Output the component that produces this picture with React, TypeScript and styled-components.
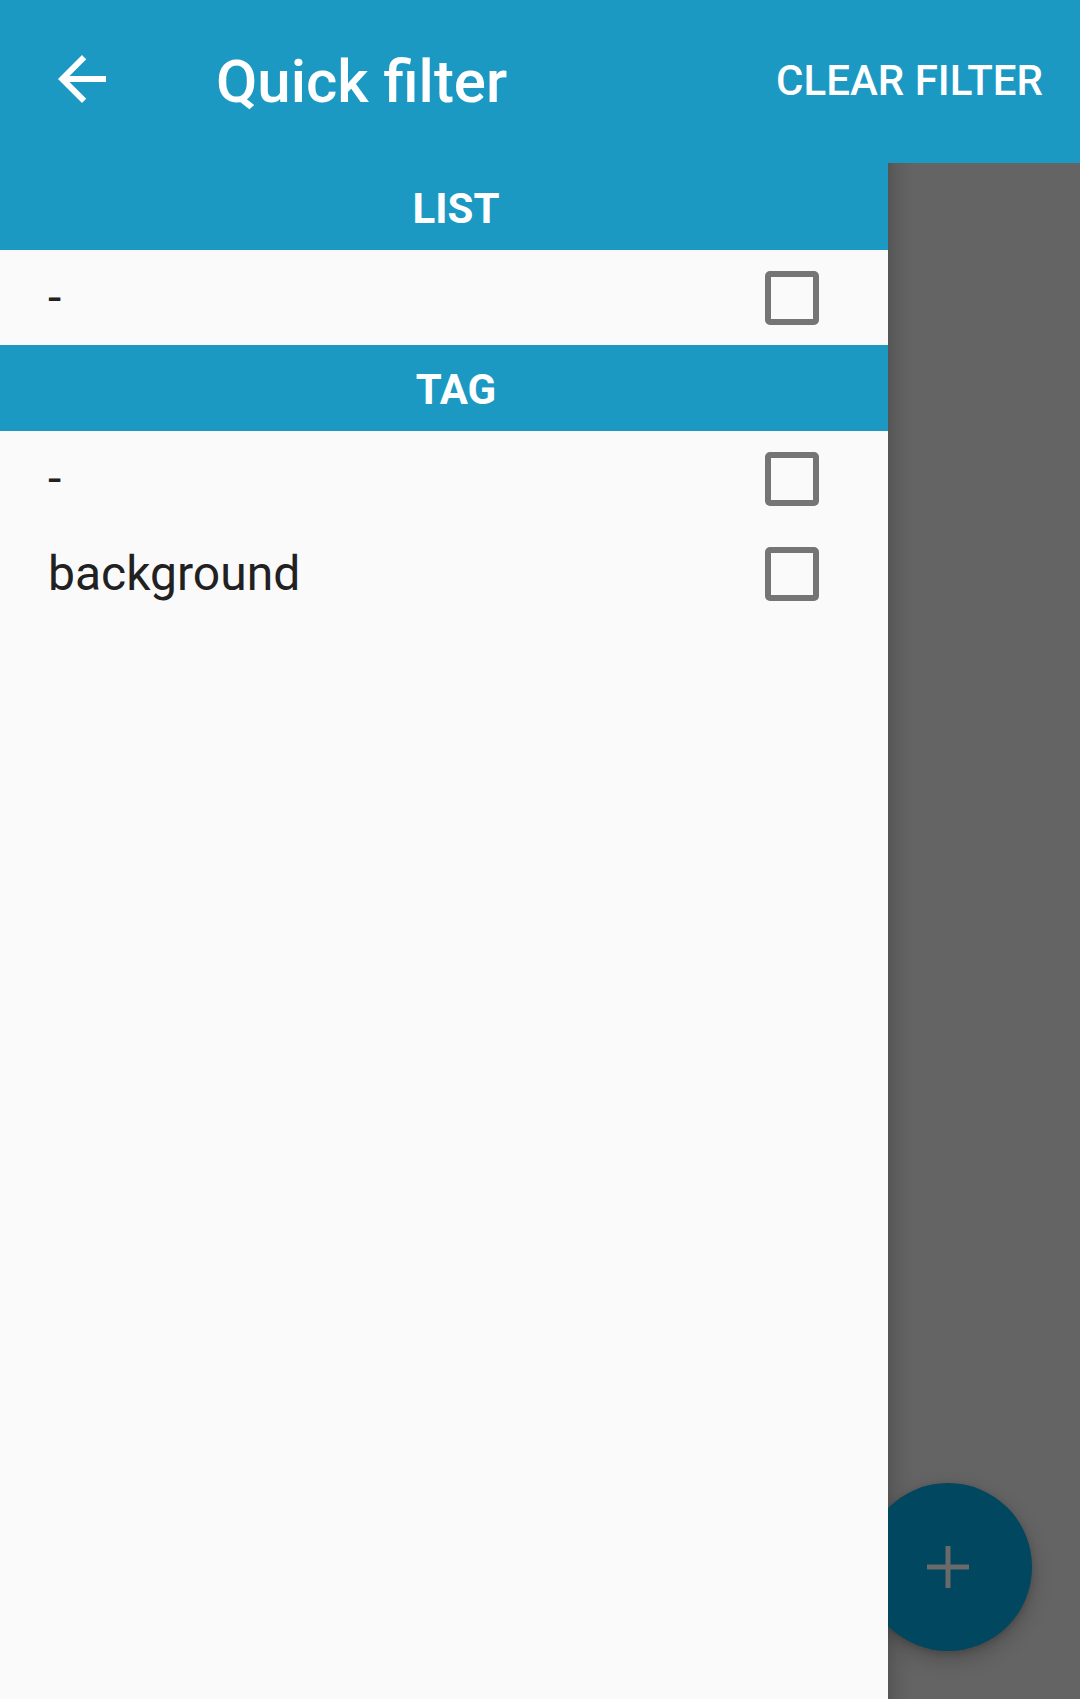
import React from "react";
import styled, { createGlobalStyle } from "styled-components";

const Global = createGlobalStyle`
  html, body { margin: 0; padding: 0; background: #646464; }
  body { font-family: Roboto, "Noto Sans", "Liberation Sans", sans-serif; }
  * { box-sizing: border-box; }
`;

const Page = styled.div`
  width: 1080px;
  height: 1699px;
  display: flex;
  flex-direction: column;
  overflow: hidden;
`;

const AppBar = styled.header`
  height: 163px;
  flex: none;
  background: #1b99c3;
  color: #ffffff;
  display: flex;
  align-items: center;
  padding: 0 37px 0 46px;
`;

const BackButton = styled.div`
  width: 72px;
  height: 72px;
  margin-bottom: 6px;
  display: flex;
`;

const Title = styled.h1`
  margin: 0 0 0 98px;
  font-size: 60px;
  font-weight: 500;
  line-height: 1;
  flex: 1;
`;

const Action = styled.div`
  font-size: 42px;
  font-weight: 500;
  line-height: 1;
  margin-bottom: 2px;
`;

const Body = styled.div`
  flex: 1;
  display: flex;
`;

const Drawer = styled.nav`
  width: 888px;
  flex: none;
  background: #fafafa;
  display: flex;
  flex-direction: column;
`;

const SectionHeader = styled.div<{ $h: number }>`
  height: ${(p) => p.$h}px;
  background: #1b99c3;
  color: #ffffff;
  display: flex;
  align-items: center;
  justify-content: center;
  padding: 4px 0 0 24px;
  font-size: 42px;
  font-weight: 700;
  line-height: 1;
`;

const Row = styled.div`
  height: 95px;
  display: flex;
  align-items: center;
  padding: 0 69px 0 48px;
  color: #212121;
  font-size: 48px;
  line-height: 1;
`;

const Label = styled.span`
  flex: 1;
`;

const Box = styled.span`
  width: 54px;
  height: 54px;
  border: 6px solid #757575;
  border-radius: 5px;
`;

const Scrim = styled.div`
  flex: 1;
  position: relative;
  background: linear-gradient(to right, #555555 0px, #5e5e5e 10px, #646464 26px);
`;

const Fab = styled.div`
  position: absolute;
  left: -24px;
  top: 1320px;
  width: 168px;
  height: 168px;
  border-radius: 50%;
  background: #01475f;
  box-shadow: 0 8px 20px rgba(0, 0, 0, 0.22), 0 2px 6px rgba(0, 0, 0, 0.15);
  display: flex;
  align-items: center;
  justify-content: center;
`;

const FabClip = styled.div`
  position: absolute;
  inset: 0;
  overflow: hidden;
`;

const items = [
  { section: "LIST", h: 87, rows: ["-"] },
  { section: "TAG", h: 86, rows: ["-", "background"] },
];

export default function App() {
  return (
    <Page>
      <Global />
      <AppBar>
        <BackButton>
          <svg width="72" height="72" viewBox="0 0 24 24" fill="#ffffff">
            <path d="M20 11H7.830l5.59-5.59L12 4l-8 8 8 8 1.41-1.41L7.83 13H20v-2z" />
          </svg>
        </BackButton>
        <Title>Quick filter</Title>
        <Action>CLEAR FILTER</Action>
      </AppBar>
      <Body>
        <Drawer>
          {items.map((s) => (
            <React.Fragment key={s.section}>
              <SectionHeader $h={s.h}>{s.section}</SectionHeader>
              {s.rows.map((r, i) => (
                <Row key={i}>
                  <Label>{r}</Label>
                  <Box />
                </Row>
              ))}
            </React.Fragment>
          ))}
        </Drawer>
        <Scrim>
          <FabClip>
            <Fab>
              <svg width="42" height="42" viewBox="0 0 42 42">
                <rect x="18.5" y="0" width="5" height="42" fill="#6a6a6a" />
                <rect x="0" y="18.5" width="42" height="5" fill="#6a6a6a" />
              </svg>
            </Fab>
          </FabClip>
        </Scrim>
      </Body>
    </Page>
  );
}
